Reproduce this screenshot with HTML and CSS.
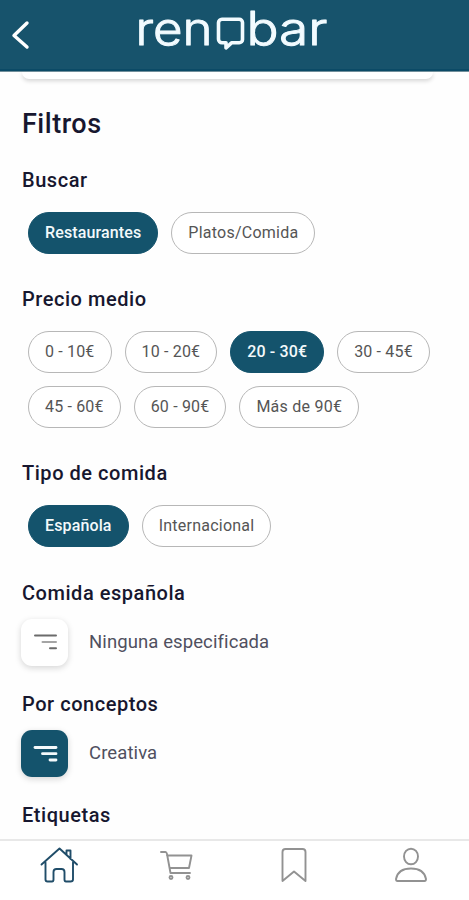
FILE: index.html
```html
<!DOCTYPE html>
<html lang="es">
<head>
<meta charset="utf-8">
<title>Renobar</title>
<link rel="stylesheet" href="styles.css">
</head>
<body>
<div class="app">
  <header class="header">
    <svg class="back" width="20" height="30" viewBox="0 0 20 30"><path d="M17 3 4 15.500 17 27"/></svg>
    <svg class="logo" width="200" height="60" viewBox="134 0 200 60">
      <text x="135.500" y="45" textLength="77" lengthAdjust="spacingAndGlyphs">ren</text>
      <path d="M222 19.200h17.200a3.300 3.300 0 0 1 3.300 3.300v17a3.300 3.300 0 0 1-3.300 3.300h-7.700l-5.500 5v-5h-4a3.500 3.500 0 0 1-3.500-3.500V22.700a3.500 3.500 0 0 1 3.500-3.500z"/>
      <text x="246.500" y="45" textLength="81" lengthAdjust="spacingAndGlyphs">bar</text>
    </svg>
  </header>
  <main class="content">
    <div class="search-card"></div>
    <h1>Filtros</h1>
    <section class="group">
      <h2>Buscar</h2>
      <div class="chips"><button class="chip on">Restaurantes</button><button class="chip wide">Platos/Comida</button></div>
    </section>
    <section class="group prices">
      <h2>Precio medio</h2>
      <div class="chips"><button class="chip">0 - 10€</button><button class="chip">10 - 20€</button><button class="chip on">20 - 30€</button><button class="chip">30 - 45€</button><button class="chip">45 - 60€</button><button class="chip">60 - 90€</button><button class="chip wide">Más de 90€</button></div>
    </section>
    <section class="group type">
      <h2>Tipo de comida</h2>
      <div class="chips"><button class="chip on">Española</button><button class="chip wide">Internacional</button></div>
    </section>
    <section class="picker">
      <h2>Comida española</h2>
      <div class="choice"><span class="tile"><svg width="47" height="47" viewBox="0 0 47 47"><path d="M14 16.500h21"/><path class="mid" d="M21.500 23h13.500"/><path d="M29 29.300h6"/></svg></span><span>Ninguna especificada</span></div>
    </section>
    <section class="picker">
      <h2>Por conceptos</h2>
      <div class="choice"><span class="tile on"><svg width="47" height="47" viewBox="0 0 47 47"><path d="M14 17.500h21"/><path d="M21.500 23.700h13.500"/><path d="M29 30h6"/></svg></span><span>Creativa</span></div>
    </section>
    <h2>Etiquetas</h2>
  </main>
  <nav class="tabs">
    <a class="active"><svg width="40" height="40" viewBox="39 846 40 40"><path d="M45.500 862.500V879.500q0 2 2 2h4.500q1.500 0 1.500-2v-7.500q0-3 3-3h5q3 0 3 3v7.500q0 2 1.500 2h4.500q2.500 0 2.500-2V862.500M41.500 864.500 59.500 848.500 77 864.500M66.500 854.500v-4h4v8.500"/></svg></a>
    <a><svg width="40" height="40" viewBox="156 846 40 40"><path d="M161 852h4.500q1 0 1.500 2l3.500 19H190M167 855.500h24.500l-2.500 12.500h-19.500"/><circle cx="171" cy="877.500" r="1.500"/><circle cx="188" cy="877.500" r="1.500"/></svg></a>
    <a><svg width="40" height="40" viewBox="273 846 40 40"><path d="M282.500 881V852q0-3 3-3h17q3 0 3 3v29L294 871.500z"/></svg></a>
    <a><svg width="40" height="40" viewBox="390.500 846 40 40"><ellipse cx="411.500" cy="856.500" rx="7" ry="7.800"/><path d="M398 881q-1.500 0-1.500-2 2-10.500 15-10.500t15 10.500q0 2-1.500 2z"/></svg></a>
  </nav>
</div>
</body>
</html>
```
FILE: styles.css
```css
* { box-sizing: border-box; }
body { margin: 0; background: #fefefe; color: #17172f; font-family: Roboto, "Liberation Sans", sans-serif; }
.app { height: 900px; display: flex; flex-direction: column; overflow: hidden; }
.header { flex: 0 0 72px; display: grid; grid-template-columns: 134px 200px 1fr; background: #17536c; border-bottom: 1px solid #718f9b; box-shadow: inset 0 -2px #0b4a66; }
.back { margin: 20px 0 0 10px; fill: none; stroke: #fff; stroke-width: 3.4; stroke-linecap: round; stroke-linejoin: round; }
.logo { fill: #f2fbff; font-family: Inter, sans-serif; font-size: 46px; font-weight: 300; }
.logo text { stroke: #f2fbff; stroke-width: 1; stroke-linejoin: round; }
.logo path { fill: none; stroke: #f2fbff; stroke-width: 3.6; stroke-linejoin: round; }
.content { flex: 1; min-height: 0; overflow: hidden; padding: 0 22px; }
.search-card { width: 411px; height: 7px; background: #fff; border-radius: 0 0 10px 10px; box-shadow: 0 2px 4px #d5d5d5; }
h1 { margin: 29px 0 28px; font-size: 27px; line-height: 32px; font-weight: 500; letter-spacing: .5px; }
h2 { margin: 0; font-size: 20px; line-height: 24px; font-weight: 500; letter-spacing: .54px; }
.group { height: 119px; }
.prices { height: 174px; }
.type { height: 120px; }
.chips { display: flex; flex-wrap: wrap; gap: 13px; padding: 20px 0 0 6px; }
.chip { height: 42px; padding: 0 16px; border: 1px solid #b7b7b7; border-radius: 21px; background: #fff; color: #555; font: 400 16px/38px Roboto, sans-serif; letter-spacing: .17px; white-space: nowrap; }
.chip.wide { letter-spacing: .24px; }
.chip.on { background: #14536c; border-color: #14536c; color: #f3f9fb; font-weight: 500; letter-spacing: .13px; }
.picker { height: 111px; }
.choice { display: flex; align-items: center; gap: 21px; margin: 14px 0 0 -1px; color: #50505f; font-size: 18.5px; letter-spacing: .1px; }
.choice > span:last-child { position: relative; top: -1px; }
.tile { width: 47px; height: 47px; border-radius: 11px; background: #fff; box-shadow: 0 2px 6px #d5d5d5; }
.tile svg { display: block; fill: none; stroke: #6b6b6b; stroke-width: 2; stroke-linecap: round; }
.tile .mid { stroke: #a5a5a5; }
.tile.on { background: #14536c; }
.tile.on svg { stroke: #f4fafc; stroke-width: 2.8; }
.tabs { flex: 0 0 61px; display: grid; grid-template-columns: repeat(4, 1fr); justify-items: center; padding-top: 5px; border-top: 2px solid #e8e8e8; background: #fff; }
.tabs svg { display: block; fill: none; stroke: #929292; stroke-width: 1.9; stroke-linejoin: round; stroke-linecap: round; }
.tabs .active svg { stroke: #204d69; }
```
